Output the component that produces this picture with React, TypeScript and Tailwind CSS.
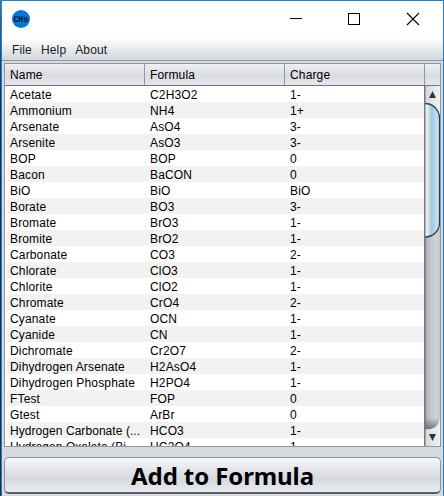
import React from "react";

const ions: [string, string, string][] = [
  ["Acetate", "C2H3O2", "1-"],
  ["Ammonium", "NH4", "1+"],
  ["Arsenate", "AsO4", "3-"],
  ["Arsenite", "AsO3", "3-"],
  ["BOP", "BOP", "0"],
  ["Bacon", "BaCON", "0"],
  ["BiO", "BiO", "BiO"],
  ["Borate", "BO3", "3-"],
  ["Bromate", "BrO3", "1-"],
  ["Bromite", "BrO2", "1-"],
  ["Carbonate", "CO3", "2-"],
  ["Chlorate", "ClO3", "1-"],
  ["Chlorite", "ClO2", "1-"],
  ["Chromate", "CrO4", "2-"],
  ["Cyanate", "OCN", "1-"],
  ["Cyanide", "CN", "1-"],
  ["Dichromate", "Cr2O7", "2-"],
  ["Dihydrogen Arsenate", "H2AsO4", "1-"],
  ["Dihydrogen Phosphate", "H2PO4", "1-"],
  ["FTest", "FOP", "0"],
  ["Gtest", "ArBr", "0"],
  ["Hydrogen Carbonate (...", "HCO3", "1-"],
  ["Hydrogen Oxalate (Bi...", "HC2O4", "1-"],
];

function TitleBar() {
  return (
    <header className="flex h-[37px] shrink-0 bg-white pl-[10px]">
      <svg className="mt-[9px]" width="18" height="18" viewBox="0 0 18 18">
        <circle cx="9" cy="9" r="9" fill="#0078d7" />
        <text x="1.5" y="12" fontSize="8.5" fontFamily="Liberation Mono, monospace" fontWeight="bold" fill="#03152b" textLength="15">CHs</text>
      </svg>
      <svg className="ml-auto" width="160" height="37" viewBox="0 0 160 37" fill="none" stroke="#000" shapeRendering="crispEdges">
        <path d="M7 17.5H19" />
        <rect x="65.5" y="12.5" width="11" height="11" />
        <path d="M124 12L136 24M136 12L124 24" shapeRendering="auto" strokeWidth="1.1" />
      </svg>
    </header>
  );
}

function ScrollBar() {
  return (
    <svg className="shrink-0" width="16" height="360" viewBox="0 0 16 360">
      <defs>
        <linearGradient id="track"><stop stopColor="#9b9ba0" /><stop offset=".3" stopColor="#bfc0c5" /><stop offset=".75" stopColor="#d2d3d8" /><stop offset="1" stopColor="#c6c7cc" /></linearGradient>
        <linearGradient id="thumb"><stop stopColor="#f4f9fd" /><stop offset=".2" stopColor="#d9e7f2" /><stop offset=".45" stopColor="#a9c7dd" /><stop offset="1" stopColor="#cfe8f8" /></linearGradient>
        <linearGradient id="cap"><stop stopColor="#d5d6da" /><stop offset=".5" stopColor="#e5e6e9" /><stop offset="1" stopColor="#f1f2f4" /></linearGradient>
        <linearGradient id="shade" x2="0" y2="1"><stop stopColor="#555860" stopOpacity="0" /><stop offset="1" stopColor="#555860" stopOpacity=".75" /></linearGradient>
      </defs>
      <rect width="16" height="360" fill="url(#track)" />
      <rect x="1" width="15" height="27" fill="url(#cap)" />
      <path d="M1 332H15V343H1Z" fill="url(#shade)" />
      <path d="M1 343.5C9 343.5 14 340 15 335L16 332V360H1Z" fill="url(#cap)" />
      <path d="M1 17.5C9 17.5 15.5 24 15.5 32V137C15.5 145 9 151 1 151Z" fill="url(#thumb)" />
      <path d="M1 17.5C9 17.5 15.5 24 15.5 32V137C15.5 145 9 151 1 151" fill="none" stroke="#263f52" strokeWidth="1.3" />
      <rect width="1.5" height="360" fill="#77777d" />
      <path d="M5 12H12L8.5 5ZM5 348H12L8.5 355Z" fill="#333" />
    </svg>
  );
}

export default function App() {
  return (
    <div className="flex h-[496px] w-[444px] overflow-hidden bg-[#d6d9df] font-['Liberation_Sans',Arial,sans-serif] text-[12px] tracking-[0.15px] text-black">
      <div className="w-px shrink-0 bg-gradient-to-b from-[#526f91] via-[#202a34] via-20% to-[#252a30]" />
      <div className="flex min-w-0 flex-1 flex-col border-x border-t border-[#1883d7]">
        <TitleBar />
        <nav className="flex h-[23px] shrink-0 items-center gap-[9px] border-b border-[#9297a1] bg-gradient-to-b from-white via-[#eceef1] via-40% to-[#d3d6dc] pl-[10px] pt-[2px] text-[#222]">
          <span>File</span><span>Help</span><span>About</span>
        </nav>
        <main className="flex min-h-0 flex-1 flex-col px-[2px] pt-[2px]">
          <section className="flex h-[384px] shrink-0 flex-col overflow-hidden border border-[#9297a1] bg-white">
            <div className="flex h-[22px] shrink-0 border-b border-[#74747e] bg-gradient-to-b from-[#eff0f3] via-[#d8dbe1] via-55% to-[#e5e8ed] leading-[22px]">
              <div className="w-[140px] border-r border-[#9297a1] pl-[5px]">Name</div>
              <div className="w-[140px] border-r border-[#9297a1] pl-[5px]">Formula</div>
              <div className="w-[140px] border-r border-[#9297a1] pl-[5px]">Charge</div>
            </div>
            <div className="flex min-h-0 flex-1">
              <div className="min-w-0 flex-1 overflow-hidden pl-[2px]">
                {ions.map(([name, formula, charge]) => (
                  <div key={name} className="flex h-4 whitespace-nowrap pl-[3px] leading-[18px] even:bg-[#f2f2f2]">
                    <span className={name.endsWith("...") ? "w-[140px] tracking-[0.06px]" : "w-[140px]"}>{name}</span>
                    <span className="w-[140px]">{formula}</span>
                    <span>{charge}</span>
                  </div>
                ))}
              </div>
              <ScrollBar />
            </div>
          </section>
          <button className="mt-[10px] h-[37px] shrink-0 rounded-[5px] border border-b-2 border-[#8d9199] border-b-[#5c5f66] bg-gradient-to-b from-[#f6f7f8] via-[#d6d9df] via-60% to-[#e8eaef] pt-px font-['Noto_Sans','Open_Sans',sans-serif] text-[24px] leading-[33px] font-bold tracking-[-0.1px]">
            Add to Formula
          </button>
        </main>
      </div>
    </div>
  );
}
